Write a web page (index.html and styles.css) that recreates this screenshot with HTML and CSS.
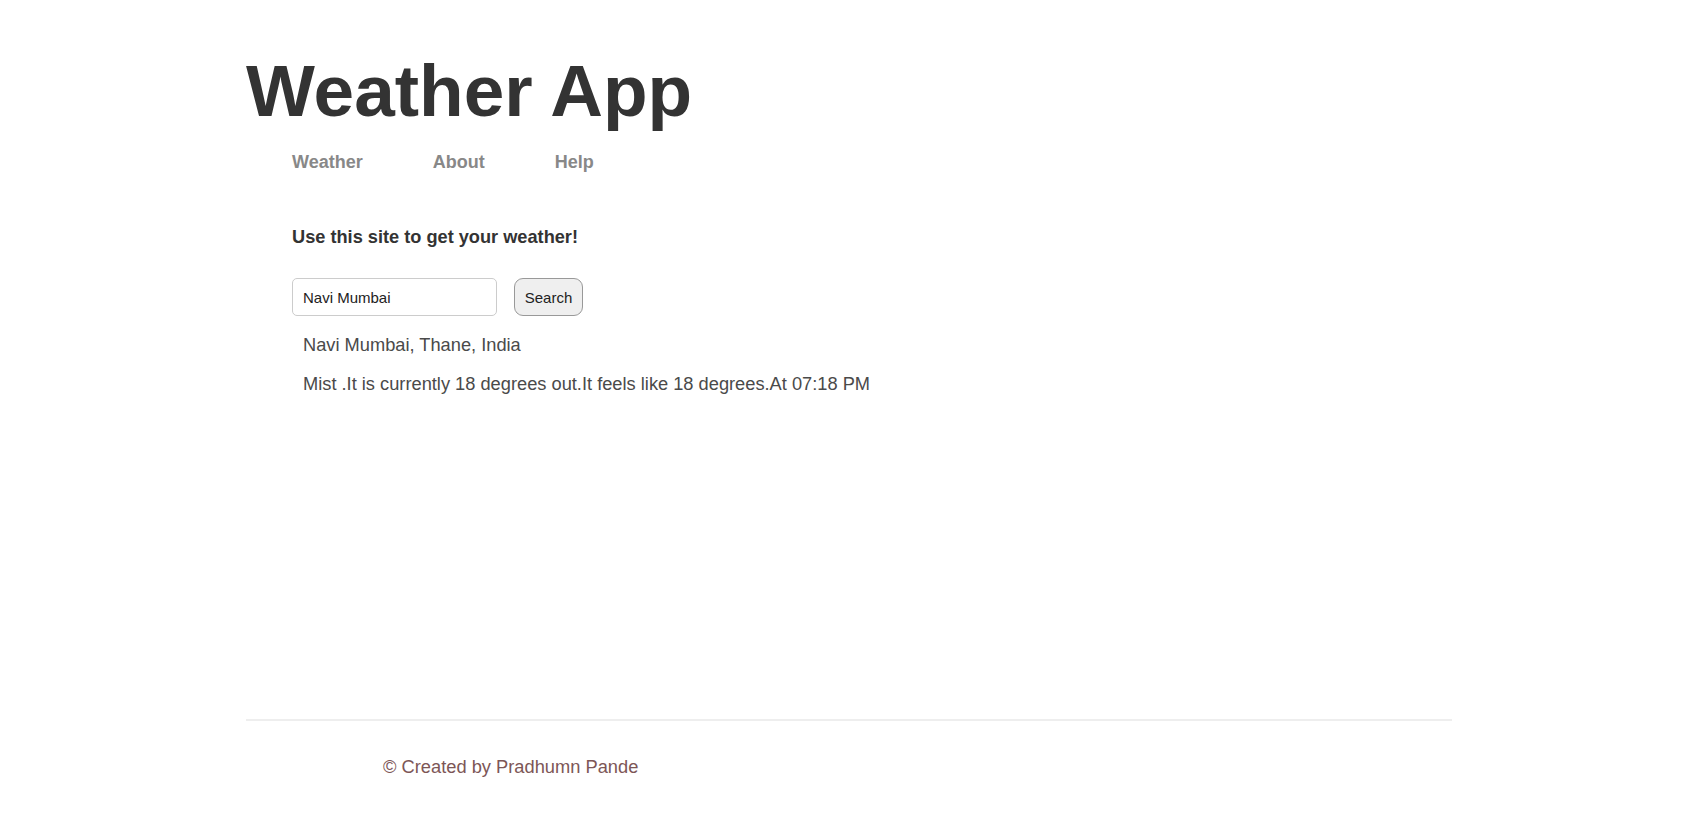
FILE: index.html
```html
<!DOCTYPE html>
<html lang="en">
<head>
<meta charset="utf-8">
<title>Weather App</title>
<link rel="stylesheet" href="styles.css">
</head>
<body>
<div class="page">
  <header class="header">
    <h1 class="title">Weather App</h1>
    <nav class="nav">
      <a class="nav-link" href="#">Weather</a>
      <a class="nav-link" href="#">About</a>
      <a class="nav-link" href="#">Help</a>
    </nav>
  </header>
  <main class="main">
    <p class="intro">Use this site to get your weather!</p>
    <form class="search-form">
      <input class="search-input" type="text" value="Navi Mumbai">
      <button class="search-btn" type="button">Search</button>
    </form>
    <div class="result">
      <p class="result-line">Navi Mumbai, Thane, India</p>
      <p class="result-line">Mist .It is currently 18 degrees out.It feels like 18 degrees.At 07:18 PM</p>
    </div>
  </main>
  <footer class="footer">
    <p class="footer-text">© Created by Pradhumn Pande</p>
  </footer>
</div>
</body>
</html>
```
FILE: styles.css
```css
* { box-sizing: border-box; }
html, body { margin: 0; padding: 0; background: #fff; }
body {
  font-family: "Liberation Sans", Arial, sans-serif;
  color: #333;
}
.page {
  margin: 0 auto;
  width: 1206px;
  min-height: 100vh;
  display: flex;
  flex-direction: column;
}
.header { padding-top: 51px; }
.title {
  margin: 0;
  font-size: 73px;
  line-height: 80px;
  font-weight: bold;
  color: #333;
}
.nav {
  display: flex;
  gap: 70px;
  margin-top: 21px;
  padding-left: 46px;
}
.nav-link {
  font-size: 18px;
  line-height: 20px;
  font-weight: bold;
  color: #888;
  text-decoration: none;
}
.main { padding-left: 46px; }
.intro {
  margin: 55px 0 0;
  font-size: 18.2px;
  line-height: 20px;
  font-weight: bold;
  color: #333;
}
.search-form {
  display: flex;
  gap: 17px;
  margin-top: 31px;
}
.search-input {
  width: 205px;
  height: 38px;
  border: 1px solid #ccc;
  border-radius: 5px;
  padding: 0 10px;
  font-family: "Liberation Sans", Arial, sans-serif;
  font-size: 15px;
  color: #222;
  outline: none;
}
.search-btn {
  width: 69px;
  height: 38px;
  border: 1px solid #999;
  border-radius: 9px;
  background: #efefef;
  font-family: "Liberation Sans", Arial, sans-serif;
  font-size: 15px;
  color: #222;
  padding: 0;
}
.result {
  padding-left: 11px;
  margin-top: 19px;
}
.result-line {
  margin: 0 0 19px;
  font-size: 18.25px;
  line-height: 20px;
  color: #4a4a4a;
}
.footer {
  margin-top: auto;
  border-top: 2px solid #eee;
  padding: 36px 0 36px 137px;
}
.footer-text {
  margin: 0;
  font-size: 18.3px;
  line-height: 20px;
  color: #7d5656;
}
```
